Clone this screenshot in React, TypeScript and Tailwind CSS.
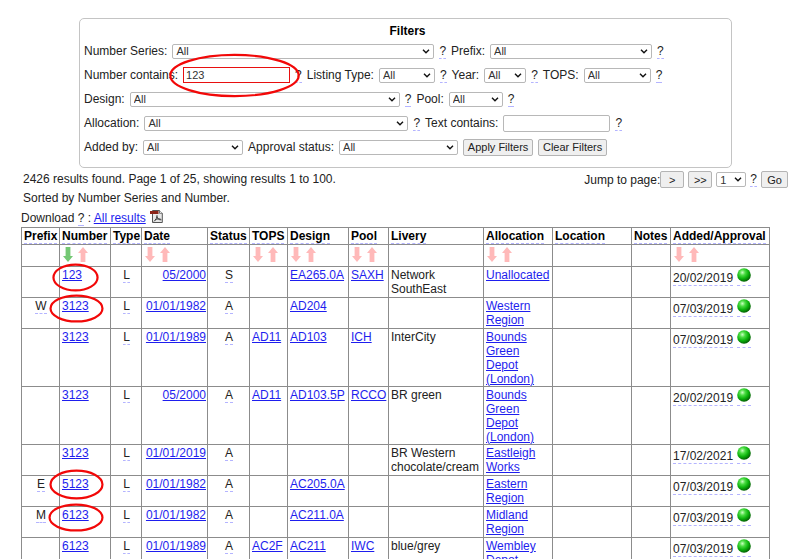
import type { ReactNode } from "react";

const dashed = "border-b border-dashed border-[#b4b4ff]";

function Help() {
  return (
    <abbr title="Help" className={"leading-[14px] no-underline " + dashed}>
      ?
    </abbr>
  );
}

function Select({ id, width, value = "All" }: { id: string; width: string; value?: string }) {
  return (
    <span className={"grid items-center " + width}>
      <select
        id={id}
        className="col-start-1 row-start-1 h-[15px] w-full appearance-none rounded-[2px] border border-[#b8b8b8] bg-white pl-[3px] text-[11px] leading-[12px] text-[#333]"
      >
        <option>{value}</option>
      </select>
      <svg viewBox="0 0 8 5" className="pointer-events-none col-start-1 row-start-1 mr-1 h-[5px] w-2 justify-self-end" fill="none" stroke="#111" strokeWidth="1.4">
        <path d="M1 0.8 4 3.8 7 0.8" />
      </svg>
    </span>
  );
}

function Filter({ id, label, width, help = true }: { id: string; label: string; width: string; help?: boolean }) {
  return (
    <>
      <label htmlFor={id}>{label}</label>
      <Select id={id} width={width} />
      {help && <Help />}
    </>
  );
}

function Button({ children, width }: { children: ReactNode; width: string }) {
  return (
    <button className={"h-[17px] rounded-xs border border-[#b4b4b4] bg-[#efefef] text-[11px] leading-[14px] whitespace-nowrap text-[#222] " + width}>
      {children}
    </button>
  );
}

function Row({ children }: { children: ReactNode }) {
  return <div className="flex h-6 items-center gap-[5px] whitespace-nowrap">{children}</div>;
}

function Ring({ className }: { className: string }) {
  return (
    <svg className={"pointer-events-none absolute z-10 overflow-visible " + className}>
      <ellipse cx="50%" cy="50%" rx="49%" ry="48%" fill="none" stroke="#f20808" strokeWidth="2.2" />
    </svg>
  );
}

function Arrow({ up = false, color }: { up?: boolean; color: string }) {
  return (
    <svg viewBox="0 0 10 15" className="h-[15px] w-[10px]" fill={color}>
      <path d={up ? "M5 0 10 6H7.4V15H2.6V6H0Z" : "M2.6 0H7.4V9H10L5 15 0 9H2.6Z"} />
    </svg>
  );
}

function Ball() {
  return (
    <svg viewBox="0 0 14 14" className="h-[14px] w-[14px]">
      <defs>
        <radialGradient id="ball" cx="0.38" cy="0.32" r="0.68">
          <stop offset="0" stopColor="#c8ffc0" />
          <stop offset="0.3" stopColor="#4cdc44" />
          <stop offset="0.65" stopColor="#0cb40c" />
          <stop offset="1" stopColor="#046204" />
        </radialGradient>
      </defs>
      <circle cx="7" cy="7" r="6.8" fill="url(#ball)" />
    </svg>
  );
}

function PdfIcon() {
  return (
    <svg viewBox="0 0 13 13" className="mb-[2px] h-[13px] w-[13px]">
      <path d="M2.5 0.5H9.5L12.300 3.3V12.5H2.5Z" fill="#e8e8e8" stroke="#555" />
      <path d="M9.500 0.5V3.3H12.300" fill="#fff" stroke="#555" strokeWidth="0.8" />
      <rect x="0" y="1" width="8.500" height="3" fill="#8c2418" />
      <path d="M4 11.400C6 9.500 7.200 7.800 7 5.200M7 6.500C7.500 9 9 10 11.400 9.800M5 10C7 8.900 8.500 8.700 10.500 9" fill="none" stroke="#3a3a3a" strokeWidth="1" />
    </svg>
  );
}

type Column = { name: string; width: string; sort?: boolean; sorted?: boolean };

const columns: Column[] = [
  { name: "Prefix", width: "w-[38px]" },
  { name: "Number", width: "w-[51px]", sort: true, sorted: true },
  { name: "Type", width: "w-[31px]" },
  { name: "Date", width: "w-[66px]", sort: true },
  { name: "Status", width: "w-[42px]" },
  { name: "TOPS", width: "w-[38px]", sort: true },
  { name: "Design", width: "w-[61px]", sort: true },
  { name: "Pool", width: "w-[40px]", sort: true },
  { name: "Livery", width: "w-[95px]" },
  { name: "Allocation", width: "w-[69px]", sort: true },
  { name: "Location", width: "" },
  { name: "Notes", width: "w-[39px]" },
  { name: "Added/Approval", width: "w-[99px]", sort: true },
];

type Entry = {
  prefix?: string;
  number: string;
  ring?: string;
  date: string;
  status: string;
  tops?: string;
  design?: string;
  pool?: string;
  livery?: string;
  allocation: string;
  added: string;
};

const entries: Entry[] = [
  { number: "123", ring: "-top-[3px] -left-[7px] h-[27px] w-[45px]", date: "05/2000", status: "S", design: "EA265.0A", pool: "SAXH", livery: "Network SouthEast", allocation: "Unallocated", added: "20/02/2019" },
  { prefix: "W", number: "3123", ring: "-top-[3px] -left-[10px] h-[27px] w-[53px]", date: "01/01/1982", status: "A", design: "AD204", allocation: "Western Region", added: "07/03/2019" },
  { number: "3123", date: "01/01/1989", status: "A", tops: "AD11", design: "AD103", pool: "ICH", livery: "InterCity", allocation: "Bounds Green Depot (London)", added: "07/03/2019" },
  { number: "3123", date: "05/2000", status: "A", tops: "AD11", design: "AD103.5P", pool: "RCCO", livery: "BR green", allocation: "Bounds Green Depot (London)", added: "20/02/2019" },
  { number: "3123", date: "01/01/2019", status: "A", livery: "BR Western chocolate/cream", allocation: "Eastleigh Works", added: "17/02/2021" },
  { prefix: "E", number: "5123", ring: "-top-[6px] -left-[10px] h-[29px] w-[53px]", date: "01/01/1982", status: "A", design: "AC205.0A", allocation: "Eastern Region", added: "07/03/2019" },
  { prefix: "M", number: "6123", ring: "-top-[3px] -left-[11px] h-[27px] w-[54px]", date: "01/01/1982", status: "A", design: "AC211.0A", allocation: "Midland Region", added: "07/03/2019" },
  { number: "6123", date: "01/01/1989", status: "A", tops: "AC2F", design: "AC211", pool: "IWC", livery: "blue/grey", allocation: "Wembley Depot", added: "07/03/2019" },
];

const cell = "relative border border-[#8c8c8c] pt-px pr-px pb-0 pl-[2px] align-top";

function Link({ children }: { children?: ReactNode }) {
  return children ? (
    <a href="#" className="text-[#1e1eee] underline">
      {children}
    </a>
  ) : null;
}

export default function App() {
  return (
    <div className="h-screen overflow-hidden bg-white pt-[18px] pr-3 pl-[23px] font-['Liberation_Sans',Arial,sans-serif] text-[12px] leading-[14px] text-[#222]">
      <form className="mx-14 h-[150px] rounded-[5px] border border-[#c4c4c4] pl-1">
        <h2 className="h-5 pt-[5px] text-center font-bold text-black">Filters</h2>
        <Row>
          <Filter id="series" label="Number Series:" width="w-[262px]" />
          <Filter id="prefix" label="Prefix:" width="w-[162px]" />
        </Row>
        <Row>
          <label htmlFor="number">Number contains:</label>
          <span className="relative">
            <input id="number" defaultValue="123" className="block h-4 w-[107px] border border-[#e81010] bg-white px-[2px] text-[11px] text-[#333]" />
            <Ring className="-top-[13px] -left-[14px] h-[43px] w-[131px]" />
          </span>
          <Help />
          <Filter id="type" label="Listing Type:" width="w-[56px]" />
          <Filter id="year" label="Year:" width="w-[42px]" />
          <Filter id="tops" label="TOPS:" width="w-[67px]" />
        </Row>
        <Row>
          <Filter id="design" label="Design:" width="w-[270px]" />
          <Filter id="pool" label="Pool:" width="w-[54px]" />
        </Row>
        <Row>
          <Filter id="allocation" label="Allocation:" width="w-[264px]" />
          <label htmlFor="text">Text contains:</label>
          <input id="text" className="h-[17px] w-[107px] rounded-[2px] border border-[#b8b8b8] bg-white px-[2px] text-[11px]" />
          <Help />
        </Row>
        <Row>
          <Filter id="added" label="Added by:" width="w-[100px]" help={false} />
          <Filter id="approval" label="Approval status:" width="w-[119px]" help={false} />
          <Button width="w-[70px]">Apply Filters</Button>
          <Button width="w-[69px]">Clear Filters</Button>
        </Row>
      </form>

      <div className="flex items-start justify-between pt-[2px]">
        <div>
          <p className="leading-[18px]">2426 results found. Page 1 of 25, showing results 1 to 100.</p>
          <p className="leading-[20px]">Sorted by Number Series and Number.</p>
        </div>
        <div className="flex items-center gap-1 pt-px">
          <div className="flex items-center">
            <label htmlFor="page">Jump to page:</label>
            <Button width="w-[24px]">&gt;</Button>
          </div>
          <Button width="w-[24px]">&gt;&gt;</Button>
          <Select id="page" width="w-[30px]" value="1" />
          <Help />
          <Button width="w-[27px]">Go</Button>
        </div>
      </div>

      <div className="-ml-[2px] mr-[18px]">
        <div className="flex h-[19px] items-center gap-1">
          <span>
            Download <Help /> : <Link>All results</Link>
          </span>
          <PdfIcon />
        </div>
        <table className="w-full table-fixed border-collapse">
          <colgroup>
            {columns.map((c) => (
              <col key={c.name} className={c.width} />
            ))}
          </colgroup>
          <thead>
            <tr className="h-[17px]">
              {columns.map((c) => (
                <th key={c.name} className={cell + " text-left font-bold text-black"}>
                  <span className={dashed}>{c.name}</span>
                </th>
              ))}
            </tr>
            <tr className="h-[22px]">
              {columns.map((c) => (
                <td key={c.name} className={cell}>
                  {c.sort && (
                    <span className="flex gap-[5px] pt-px pl-px">
                      <Arrow color={c.sorted ? "#74c874" : "#ffb9b9"} />
                      <Arrow up color="#ffb9b9" />
                    </span>
                  )}
                </td>
              ))}
            </tr>
          </thead>
          <tbody>
            {entries.map((e, i) => (
              <tr key={i} className="h-[31px]">
                <td className={cell + " text-center"}>{e.prefix && <span className={dashed}>{e.prefix}</span>}</td>
                <td className={cell}>
                  <Link>{e.number}</Link>
                  {e.ring && <Ring className={e.ring} />}
                </td>
                <td className={cell + " text-center"}>
                  <span className={dashed}>L</span>
                </td>
                <td className={cell + " text-right"}>
                  <Link>{e.date}</Link>
                </td>
                <td className={cell + " text-center"}>
                  <span className={dashed}>{e.status}</span>
                </td>
                <td className={cell}><Link>{e.tops}</Link></td>
                <td className={cell}><Link>{e.design}</Link></td>
                <td className={cell}><Link>{e.pool}</Link></td>
                <td className={cell}>{e.livery}</td>
                <td className={cell}><Link>{e.allocation}</Link></td>
                <td className={cell} />
                <td className={cell} />
                <td className={cell}>
                  <span className="flex items-end gap-1">
                    <span className={dashed}>{e.added}</span>
                    <span className={"pb-[3px] " + dashed}>
                      <Ball />
                    </span>
                  </span>
                </td>
              </tr>
            ))}
          </tbody>
        </table>
      </div>
    </div>
  );
}
